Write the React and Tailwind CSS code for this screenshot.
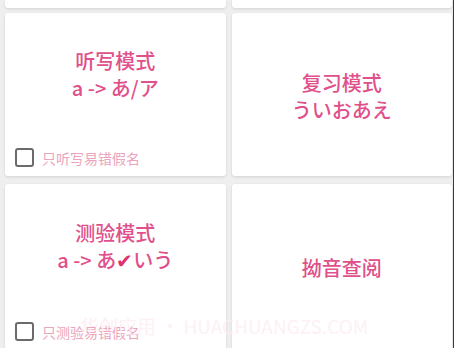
import React from 'react'

const font = { fontFamily: '"Noto Sans CJK SC", "Noto Sans CJK JP", "Noto Sans", sans-serif' }

function Checkbox({ label }) {
  return (
    <div className="flex items-center gap-[8px] pl-[10px] pb-[9px]">
      <span className="block h-[19px] w-[19px] rounded-[3px] border-2 border-[#6b6b6b]" />
      <span className="text-[14px] leading-none text-[#eba4bb]">{label}</span>
    </div>
  )
}

function Card({ lines, check, className = '' }) {
  return (
    <div className={`flex flex-col rounded-[3px] bg-white shadow-[0_1px_3px_rgba(0,0,0,0.12)] ${className}`}>
      <div
        className={`flex flex-1 flex-col items-center justify-center text-[20px] font-medium leading-[27px] text-[#e0508a] ${
          check ? 'pb-[14px]' : ''
        }`}
      >
        {lines.map((l, i) => (
          <div key={i}>{l}</div>
        ))}
      </div>
      {check && <Checkbox label={check} />}
    </div>
  )
}

export default function App() {
  return (
    <div style={font} className="relative h-[348px] w-[454px] overflow-hidden bg-[#efefef]">
      <div className="grid grid-cols-2 gap-x-[6px] pl-[5px] pr-[2px]">
        <div className="h-[8px] rounded-b-[3px] bg-white shadow-[0_1px_3px_rgba(0,0,0,0.12)]" />
        <div className="h-[8px] rounded-b-[3px] bg-white shadow-[0_1px_3px_rgba(0,0,0,0.12)]" />
      </div>
      <div className="mt-[5px] grid grid-cols-2 gap-x-[6px] gap-y-[8px] pl-[5px] pr-[2px]">
        <Card className="h-[163px]" lines={['听写模式', 'a -> あ/ア']} check="只听写易错假名" />
        <Card className="h-[163px] pt-[2px]" lines={['复习模式', 'ういおあえ']} />
        <Card className="h-[166px]" lines={['测验模式', <>a -&gt; あ<span className="text-[#e0306e]">✔</span>いう</>]} check="只测验易错假名" />
        <Card className="h-[166px]" lines={['拗音查阅']} />
      </div>
      <div className="pointer-events-none absolute left-[80px] top-[316px] whitespace-nowrap text-[19px] leading-none text-[#fdedf5] opacity-80">
        华创应用 • HUACHUANGZS.COM
      </div>
      <div className="absolute right-0 top-0 h-full w-px bg-[#3a3a3a]" />
    </div>
  )
}
